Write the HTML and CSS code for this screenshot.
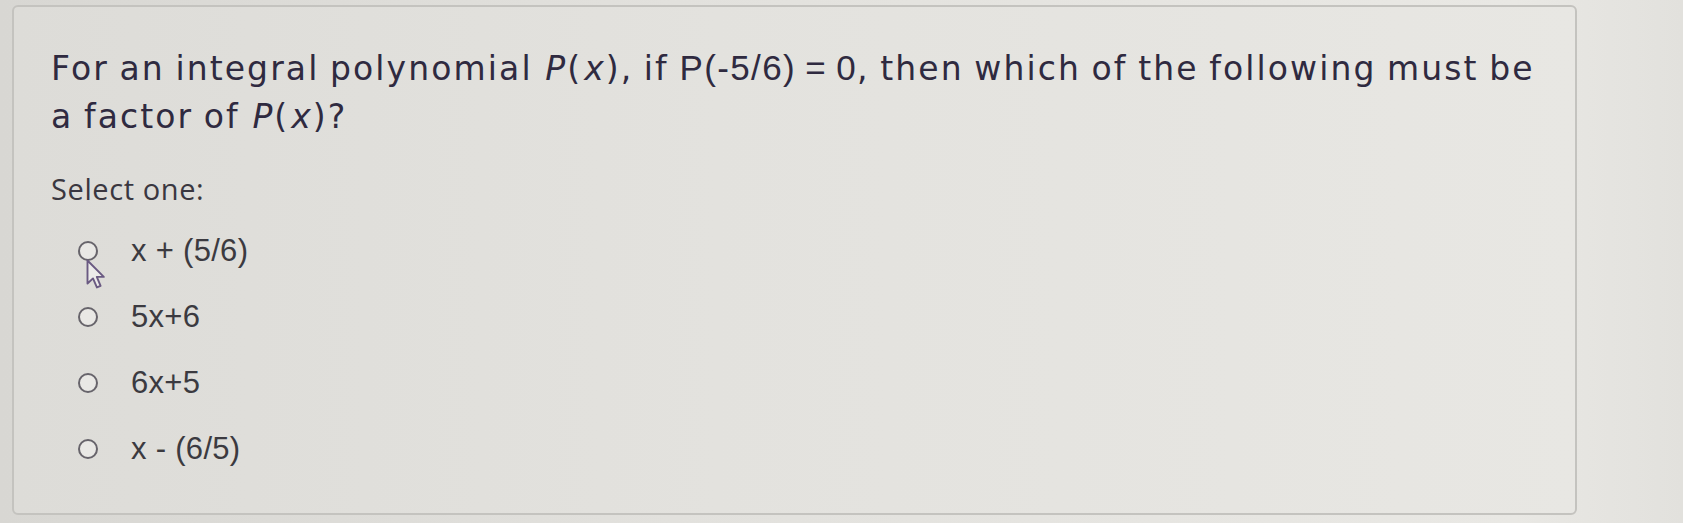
FILE: index.html
```html
<!DOCTYPE html>
<html lang="en">
<head>
<meta charset="utf-8">
<title>Question</title>
<link rel="stylesheet" href="styles.css">
</head>
<body>
<div class="page">
  <div class="card">
    <div class="question">For an integral polynomial <span class="var">P</span>(<span class="var">x</span>), if <span class="plain">P(-5/6) = 0</span>, then which of the following must be a factor of <span class="var">P</span>(<span class="var">x</span>)?</div>
    <div class="prompt">Select one:</div>
    <div class="options">
      <label class="option"><span class="radio"></span><span class="answer">x + (5/6)</span>
        <svg class="cursor" width="21" height="31" viewBox="0 0 21 31"><path d="M2.5 1.5 L2.5 24.5 L8 19.4 L11.9 28.4 L15.6 26.8 L11.8 17.9 L18.8 17.9 Z" fill="#ecebea" stroke="#6a5a82" stroke-width="1.9" stroke-linejoin="round"/></svg>
      </label>
      <label class="option"><span class="radio"></span><span class="answer">5x+6</span></label>
      <label class="option"><span class="radio"></span><span class="answer">6x+5</span></label>
      <label class="option"><span class="radio"></span><span class="answer">x - (6/5)</span></label>
    </div>
  </div>
</div>
</body>
</html>
```
FILE: styles.css
```css
html, body {
  margin: 0;
  padding: 0;
}
body {
  width: 1683px;
  height: 523px;
  overflow: hidden;
  background: linear-gradient(to right, #d8d7d3 0%, #e2e1dd 40%, #e9e8e4 90%, #e2e1dd 100%);
}
.page {
  padding: 5px 0 0 12px;
}
.card {
  box-sizing: border-box;
  width: 1565px;
  height: 510px;
  border: 2px solid #c4c3bf;
  border-radius: 6px;
  background: linear-gradient(to right, #dddcd8 0%, #e3e2de 45%, #e8e7e3 100%);
  padding: 37px 20px 0 37px;
}
.question {
  font-family: "DejaVu Sans", "Noto Sans", sans-serif;
  font-size: 33px;
  line-height: 48px;
  color: #2f2a40;
  letter-spacing: 2.1px;
  word-spacing: -2px;
  max-width: 1496px;
}
.question .var {
  font-style: italic;
  letter-spacing: 0;
  padding: 0 2px;
}
.question .plain {
  font-family: "Liberation Sans", Arial, sans-serif;
  font-size: 35px;
  letter-spacing: 1.4px;
}
.prompt {
  margin-top: 30px;
  font-family: "Open Sans", "Noto Sans", sans-serif;
  font-size: 29px;
  line-height: 36px;
  letter-spacing: 0.6px;
  color: #3a3740;
}
.options {
  margin-top: 29px;
  display: flex;
  flex-direction: column;
  gap: 36px;
}
.option {
  position: relative;
  display: flex;
  align-items: center;
  height: 30px;
  padding-left: 27px;
}
.radio {
  box-sizing: border-box;
  flex: none;
  width: 20px;
  height: 20px;
  border: 2px solid #67646b;
  border-radius: 50%;
  background: #e9e8e5;
  margin-right: 33px;
}
.answer {
  font-family: "Liberation Sans", Arial, sans-serif;
  font-size: 31px;
  line-height: 30px;
  letter-spacing: 0.3px;
  color: #3b3a40;
}
.cursor {
  position: absolute;
  left: 34px;
  top: 23px;
}
```
